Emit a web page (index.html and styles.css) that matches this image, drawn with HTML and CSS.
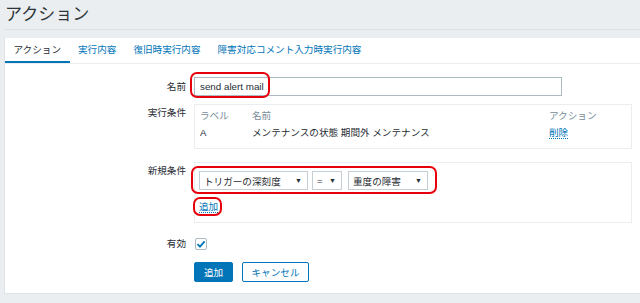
FILE: index.html
```html
<!DOCTYPE html>
<html>
<head>
    <title>アクション</title>
    <link rel="stylesheet" href="styles.css">
</head>
<body>
    <div class="page">
        <header class="header">
            <h1>アクション</h1>
        </header>
        <div class="panel">
            <nav class="tabs">
                <a class="tab active">アクション</a>
                <a class="tab">実行内容</a>
                <a class="tab">復旧時実行内容</a>
                <a class="tab">障害対応コメント入力時実行内容</a>
            </nav>
            <form class="form">
                <div class="row row-name">
                    <label class="label">名前</label>
                    <div class="field">
                        <div class="input">send alert mail</div>
                        <span class="mark mark-name"></span>
                    </div>
                </div>
                <div class="row row-conditions">
                    <label class="label">実行条件</label>
                    <div class="box cond-box">
                        <div class="cond-table">
                            <div class="th">ラベル</div>
                            <div class="th">名前</div>
                            <div class="th">アクション</div>
                            <div class="td">A</div>
                            <div class="td">メンテナンスの状態 期間外 メンテナンス</div>
                            <div class="td"><a class="link">削除</a></div>
                        </div>
                    </div>
                </div>
                <div class="row row-new">
                    <label class="label">新規条件</label>
                    <div class="box new-box">
                        <div class="selects">
                            <div class="select sel-type"><span>トリガーの深刻度</span><span class="arrow">▼</span></div>
                            <div class="select sel-op"><span>=</span><span class="arrow">▼</span></div>
                            <div class="select sel-value"><span>重度の障害</span><span class="arrow">▼</span></div>
                            <span class="mark mark-selects"></span>
                        </div>
                        <div class="add-line">
                            <span class="add-wrap">
                                <a class="link">追加</a>
                                <span class="mark mark-add"></span>
                            </span>
                        </div>
                    </div>
                </div>
                <div class="row row-enabled">
                    <label class="label">有効</label>
                    <div class="field">
                        <span class="checkbox">
                            <svg width="10" height="10" viewBox="0 0 10 10">
                                <path d="M1.5 5.2 L4 7.6 L8.6 2.4" fill="none" stroke="#0275b8" stroke-width="1.8"/>
                            </svg>
                        </span>
                    </div>
                </div>
                <div class="row row-buttons">
                    <span class="label"></span>
                    <div class="buttons">
                        <button type="button" class="btn btn-primary">追加</button>
                        <button type="button" class="btn btn-alt">キャンセル</button>
                    </div>
                </div>
            </form>
        </div>
    </div>
</body>
</html>
```

FILE: styles.css
```css
body {
    margin: 0;
    background-color: #ebeef1;
    font-family: "Liberation Sans", "Noto Sans CJK JP", sans-serif;
    font-size: 9.6px;
    color: #1f2c33;
}
.page {
    margin-left: 4px;
    overflow: hidden;
    height: 303px;
}
.header {
    height: 29px;
    border-bottom: 1px solid #dde2e6;
    margin-bottom: 8px;
}
.header h1 {
    margin: 0;
    padding-left: 1px;
    font-size: 17px;
    font-weight: normal;
    line-height: 29px;
    color: #2c3438;
}
.panel {
    background-color: #ffffff;
    border-left: 1px solid #dfe4e7;
    border-bottom: 1px solid #dfe4e7;
}
.tabs {
    display: flex;
    border-bottom: 1px solid #ebeef1;
}
.tab {
    padding: 0 8.5px;
    line-height: 23px;
    border-bottom: 2px solid transparent;
    color: #0275b8;
    cursor: pointer;
}
.tab.active {
    color: #1f2c33;
    border-bottom-color: #0275b8;
}
.form {
    padding: 13px 8px 11px 0;
}
.row {
    display: flex;
    gap: 8px;
}
.label {
    width: 181px;
    flex-shrink: 0;
    text-align: right;
    line-height: 12px;
}
.row-name {
    align-items: center;
    margin-bottom: 8px;
}
.row-conditions {
    margin-bottom: 13px;
}
.row-new {
    margin-bottom: 15px;
}
.row-conditions .label,
.row-new .label {
    padding-top: 3px;
}
.row-enabled {
    align-items: center;
    margin-bottom: 12px;
}
.field {
    position: relative;
}
.input {
    box-sizing: border-box;
    width: 368px;
    height: 19px;
    line-height: 17px;
    padding-left: 5px;
    border: 1px solid #acbbc2;
    font-size: 9.8px;
}
.box {
    box-sizing: border-box;
    width: 438px;
    border: 1px solid #ebeef1;
}
.cond-box {
    height: 45px;
    padding: 4px 5px;
}
.cond-table {
    display: grid;
    grid-template-columns: 52px 1fr 77px;
}
.th {
    line-height: 14px;
    color: #768d99;
}
.td {
    line-height: 20px;
}
.link {
    color: #0275b8;
    border-bottom: 1px dotted #0275b8;
    cursor: pointer;
}
.new-box {
    height: 61px;
    padding: 8px 4px;
}
.selects {
    position: relative;
    display: flex;
}
.select {
    box-sizing: border-box;
    height: 19px;
    display: flex;
    align-items: center;
    justify-content: space-between;
    padding: 0 5px 0 4px;
    border: 1px solid #c5ced4;
    background-color: #ffffff;
}
.arrow {
    font-size: 7px;
    color: #1f2c33;
}
.sel-type {
    width: 109px;
}
.sel-op {
    width: 30px;
    margin-left: 4px;
}
.sel-value {
    width: 80px;
    margin-left: 6px;
}
.add-line {
    margin-top: 10px;
    line-height: 14px;
}
.add-wrap {
    position: relative;
    display: inline-block;
}
.mark {
    position: absolute;
    border: 2.5px solid #e5000c;
    border-radius: 7px;
    pointer-events: none;
}
.mark-name {
    left: -4px;
    top: -5px;
    width: 76px;
    height: 22px;
}
.mark-selects {
    left: -8px;
    top: -5px;
    width: 242px;
    height: 24px;
}
.mark-add {
    left: -6px;
    top: -3px;
    width: 25px;
    height: 15px;
}
.checkbox {
    box-sizing: border-box;
    width: 12px;
    height: 12px;
    display: flex;
    align-items: center;
    justify-content: center;
    border: 1px solid #acbbc2;
    border-radius: 2px;
    margin-left: 1px;
}
.buttons {
    display: flex;
    gap: 9px;
}
.btn {
    box-sizing: border-box;
    height: 20px;
    padding: 0;
    border: 1px solid #0275b8;
    border-radius: 2px;
    font-family: "Liberation Sans", "Noto Sans CJK JP", sans-serif;
    font-size: 9.6px;
    cursor: pointer;
}
.btn-primary {
    width: 39px;
    background-color: #0275b8;
    color: #ffffff;
}
.btn-alt {
    width: 67px;
    background-color: #ffffff;
    color: #0275b8;
}
```
